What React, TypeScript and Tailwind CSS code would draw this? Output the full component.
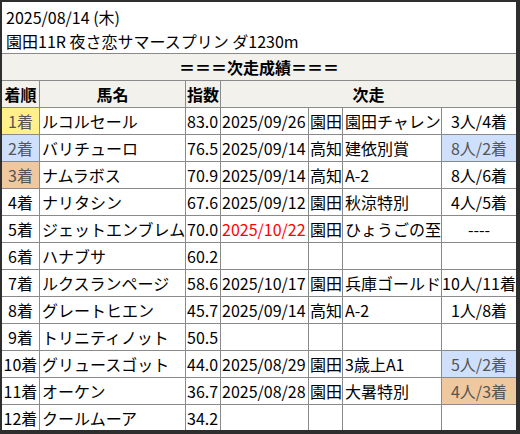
import React from 'react';

type Row = {
  rank: string;
  rankBg?: string;
  name: string;
  score: string;
  date?: string;
  dateRed?: boolean;
  venue?: string;
  race?: string;
  result?: string;
  resultBg?: string;
};

const rows: Row[] = [
  { rank: '1着', rankBg: 'bg-[#fff08c] text-[#555]', name: 'ルコルセール', score: '83.0', date: '2025/09/26', venue: '園田', race: '園田チャレン', result: '3人/4着' },
  { rank: '2着', rankBg: 'bg-[#cfe0fc] text-[#555]', name: 'バリチューロ', score: '76.5', date: '2025/09/14', venue: '高知', race: '建依別賞', result: '8人/2着', resultBg: 'bg-[#cfe0fc] text-[#555]' },
  { rank: '3着', rankBg: 'bg-[#efc8a0] text-[#555]', name: 'ナムラボス', score: '70.9', date: '2025/09/14', venue: '高知', race: 'A-2', result: '8人/6着' },
  { rank: '4着', name: 'ナリタシン', score: '67.6', date: '2025/09/12', venue: '園田', race: '秋涼特別', result: '4人/5着' },
  { rank: '5着', name: 'ジェットエンブレム', score: '70.0', date: '2025/10/22', dateRed: true, venue: '園田', race: 'ひょうごの至', result: '----' },
  { rank: '6着', name: 'ハナブサ', score: '60.2' },
  { rank: '7着', name: 'ルクスランページ', score: '58.6', date: '2025/10/17', venue: '園田', race: '兵庫ゴールド', result: '10人/11着' },
  { rank: '8着', name: 'グレートヒエン', score: '45.7', date: '2025/09/14', venue: '高知', race: 'A-2', result: '1人/8着' },
  { rank: '9着', name: 'トリニティノット', score: '50.5' },
  { rank: '10着', name: 'グリュースゴット', score: '44.0', date: '2025/08/29', venue: '園田', race: '3歳上A1', result: '5人/2着', resultBg: 'bg-[#cfe0fc] text-[#555]' },
  { rank: '11着', name: 'オーケン', score: '36.7', date: '2025/08/28', venue: '園田', race: '大暑特別', result: '4人/3着', resultBg: 'bg-[#efc8a0] text-[#555]' },
  { rank: '12着', name: 'クールムーア', score: '34.2' },
];

const cell = 'border border-[#8a8a8a] h-[27px] p-0 whitespace-nowrap overflow-hidden leading-[26px]';

export default function App() {
  return (
    <div
      className="w-[520px] h-[434px] overflow-hidden bg-white border-[#2e2e2e] border-t-2 border-l-2 border-r-4 border-b-4 text-[16px] text-black"
      style={{ fontFamily: '"Noto Sans CJK JP", "Noto Sans", sans-serif' }}
    >
      <div className="h-[51px] pl-[4px] pt-[3px] leading-[24px]">
        <div>2025/08/14 (木)</div>
        <div>園田11R 夜さ恋サマースプリン ダ1230m</div>
      </div>
      <table className="table-fixed border-collapse w-[514px] -mx-px">
        <colgroup>
          <col className="w-[38px]" />
          <col className="w-[146px]" />
          <col className="w-[35px]" />
          <col className="w-[88px]" />
          <col className="w-[34px]" />
          <col className="w-[99px]" />
          <col className="w-[75px]" />
        </colgroup>
        <tbody>
          <tr className="bg-[#f2f1ec] font-bold">
            <td colSpan={7} className={`${cell} text-center`}>＝＝＝次走成績＝＝＝</td>
          </tr>
          <tr className="bg-[#f2f1ec] font-bold">
            <td className={`${cell} text-center`}>着順</td>
            <td className={`${cell} text-center`}>馬名</td>
            <td className={`${cell} text-center`}>指数</td>
            <td colSpan={4} className={`${cell} text-center`}>次走</td>
          </tr>
          {rows.map((r) => (
            <tr key={r.rank}>
              <td className={`${cell} text-center ${r.rankBg ?? ''}`}>{r.rank}</td>
              <td className={`${cell} pl-[2px]`}>{r.name}</td>
              <td className={`${cell} pl-[1px]`}>{r.score}</td>
              <td className={`${cell} pl-[1px] ${r.dateRed ? 'text-[#ff0000]' : ''}`}>{r.date}</td>
              <td className={`${cell} pl-[1px]`}>{r.venue}</td>
              <td className={`${cell} pl-[2px]`}>{r.race}</td>
              <td className={`${cell} text-center ${r.resultBg ?? ''}`}>{r.result}</td>
            </tr>
          ))}
        </tbody>
      </table>
    </div>
  );
}
